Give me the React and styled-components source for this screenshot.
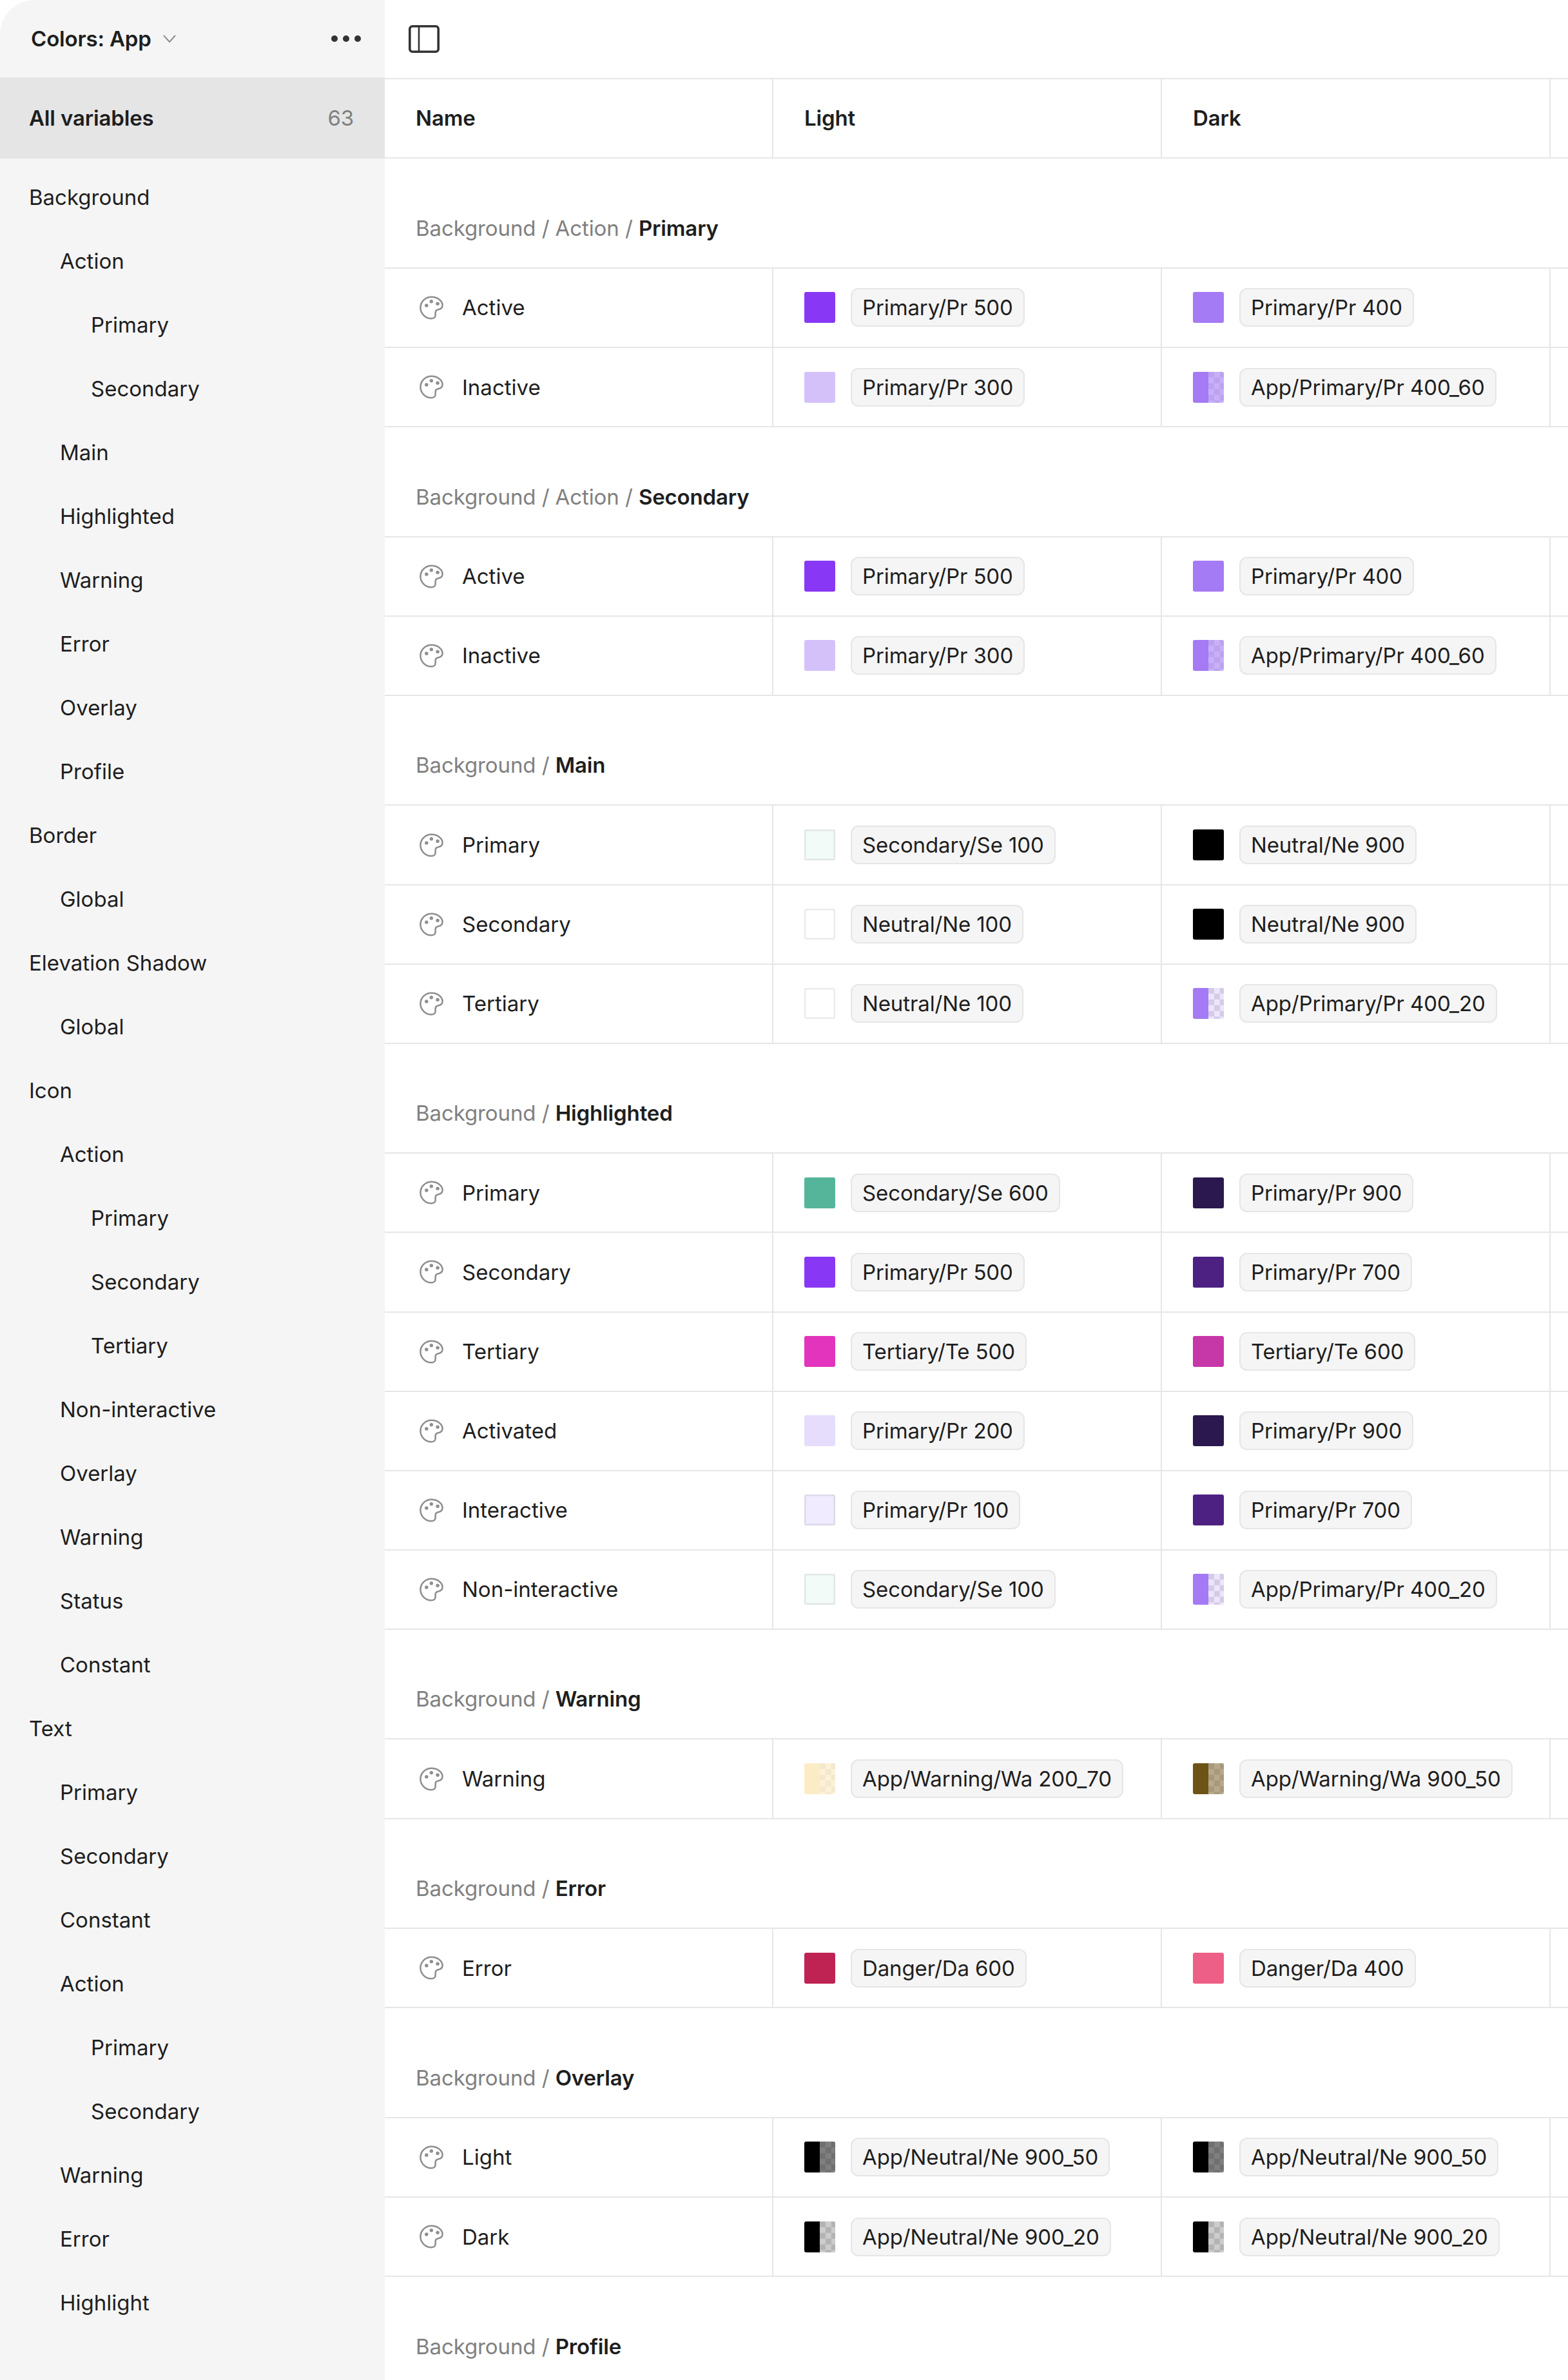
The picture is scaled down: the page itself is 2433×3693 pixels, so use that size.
import React from "react";
import styled, { createGlobalStyle } from "styled-components";

const Global = createGlobalStyle`
  html, body { margin: 0; padding: 0; background: #fff; height: 3693px; overflow: hidden; }
  #root { height: 100%; }
  * { box-sizing: border-box; }
`;

const Page = styled.div`
  display: flex;
  width: 2433px;
  height: 3693px;
  overflow: hidden;
  font-family: Inter, "Liberation Sans", sans-serif;
  font-size: 33px;
  color: #1e1e1e;
  background: #fff;
`;

const Sidebar = styled.aside`
  flex: 0 0 597px;
  background: #f5f5f5;
  border-top-left-radius: 54px;
  overflow: hidden;
`;

const SidebarHead = styled.div`
  height: 120px;
  display: flex;
  align-items: center;
  padding: 0 37px 0 48px;
`;

const Collection = styled.div`
  font-weight: 600;
  letter-spacing: -0.15px;
  display: flex;
  align-items: center;
  gap: 18px;
  flex: 1;
`;

const Dots = styled.div`
  display: flex;
  gap: 8px;
`;

const Dot = styled.span`
  width: 10px;
  height: 10px;
  border-radius: 50%;
  background: #333;
`;

const AllRow = styled.div`
  height: 126px;
  background: #e5e5e5;
  display: flex;
  align-items: center;
  justify-content: space-between;
  padding: 0 48px 0 45px;
  font-weight: 600;
  letter-spacing: -0.15px;
`;

const Count = styled.span`
  font-weight: 400;
  color: #808080;
`;

const Groups = styled.div`
  padding-top: 10px;
`;

const Group = styled.div`
  height: 99px;
  display: flex;
  align-items: center;
  padding-left: ${(p) => 45 + p.$level * 48}px;
`;

const Main = styled.main`
  flex: 1;
  min-width: 0;
`;

const TopBar = styled.div`
  height: 123px;
  display: flex;
  align-items: center;
  padding: 0 0 0 37px;
  border-bottom: 2.4px solid #e6e6e6;
`;

const Row = styled.div`
  display: grid;
  grid-template-columns: 603px 603px 603px 1fr;
  height: ${(p) => (p.$head ? 123.3 : 123.1)}px;
  border-bottom: 2.4px solid #e6e6e6;
`;

const Cell = styled.div`
  display: flex;
  align-items: center;
  min-width: 0;
  padding-left: 48px;
  padding-bottom: ${(p) => (p.$head ? "2px" : "0")};
  border-right: 2.4px solid #e6e6e6;
  font-weight: ${(p) => (p.$head ? 600 : 400)};
  letter-spacing: ${(p) => (p.$head ? "-0.15px" : "normal")};
`;

const EmptyCell = styled.div``;

const NameText = styled.span`
  margin-left: 27px;
`;

const PaletteSvg = styled.svg`
  flex: 0 0 41px;
  margin-left: 4px;
`;

const SectionTitle = styled.div`
  height: 170.6px;
  display: flex;
  align-items: flex-end;
  padding: 0 0 41px 48px;
  border-bottom: 2.4px solid #e6e6e6;
  color: #808080;
  letter-spacing: -0.1px;
  white-space: pre;
`;

const Strong = styled.strong`
  font-weight: 600;
  letter-spacing: -0.15px;
  color: #1e1e1e;
`;

const Swatch = styled.span`
  flex: 0 0 48px;
  width: 48px;
  height: 48px;
  border-radius: 3px;
  overflow: hidden;
  display: flex;
  box-shadow: ${(p) => (p.$outlined ? "inset 0 0 0 2.4px rgba(0,0,0,.08)" : "none")};
  background: ${(p) => p.$color};
`;

const SwatchAlpha = styled.span`
  margin-left: 24px;
  width: 24px;
  height: 48px;
  background-color: #fff;
  background-image: linear-gradient(${(p) => p.$overlay}, ${(p) => p.$overlay}),
    repeating-conic-gradient(#fff 0 25%, #e0e0e0 0 50%);
  background-size: 100% 100%, 17.8px 17.8px;
`;

const Tag = styled.span`
  margin-left: 24px;
  height: 60px;
  display: inline-flex;
  align-items: center;
  padding: 0 16px;
  background: #f5f5f5;
  border: 2.4px solid #e6e6e6;
  border-radius: 12px;
  letter-spacing: -0.12px;
  white-space: nowrap;
`;

const PaletteIcon = () => (
  <PaletteSvg width="41" height="41" viewBox="0 0 24 24" fill="none" stroke="#8f8f8f" strokeWidth="1.5">
    <path d="M12 2.2C6.5 2.2 2 6.6 2 12s4.5 9.8 10 9.8c2 0 3.6-1.2 3.6-3.2v-2c0-1.6.8-2.5 2.2-2.8 2.4-.4 4.2-1.8 4.2-4.1C22 5.8 17.5 2.2 12 2.2z" />
    <circle cx="7.5" cy="9.9" r="1.6" fill="#8f8f8f" stroke="none" />
    <circle cx="11.9" cy="6.3" r="1.6" fill="#8f8f8f" stroke="none" />
    <circle cx="17.6" cy="8.3" r="1.6" fill="#8f8f8f" stroke="none" />
  </PaletteSvg>
);

const Chevron = () => (
  <svg width="20" height="12" viewBox="0 0 20 12" fill="none" stroke="#8c8c8c" strokeWidth="2">
    <path d="M1 1l9 10 9-10" />
  </svg>
);

const PanelIcon = () => (
  <svg width="48" height="43" viewBox="0 0 48 43" fill="none" stroke="#333" strokeWidth="3.6">
    <rect x="1.8" y="1.8" width="44.4" height="39.4" rx="4" />
    <path d="M16 2v39" strokeWidth="2.6" />
  </svg>
);

const sidebarItems = [
  ["Background", 0], ["Action", 1], ["Primary", 2], ["Secondary", 2], ["Main", 1], ["Highlighted", 1],
  ["Warning", 1], ["Error", 1], ["Overlay", 1], ["Profile", 1], ["Border", 0], ["Global", 1],
  ["Elevation Shadow", 0], ["Global", 1], ["Icon", 0], ["Action", 1], ["Primary", 2], ["Secondary", 2],
  ["Tertiary", 2], ["Non-interactive", 1], ["Overlay", 1], ["Warning", 1], ["Status", 1], ["Constant", 1],
  ["Text", 0], ["Primary", 1], ["Secondary", 1], ["Constant", 1], ["Action", 1], ["Primary", 2],
  ["Secondary", 2], ["Warning", 1], ["Error", 1], ["Highlight", 1],
];

const C = {
  pr100: ["Primary/Pr 100", "#f0ebfe", true],
  pr200: ["Primary/Pr 200", "#e6dcfc"],
  pr300: ["Primary/Pr 300", "#d5c1fa"],
  pr400: ["Primary/Pr 400", "#a47af5"],
  pr500: ["Primary/Pr 500", "#8838f5"],
  pr700: ["Primary/Pr 700", "#4c2182"],
  pr900: ["Primary/Pr 900", "#2a184f"],
  pr40060: ["App/Primary/Pr 400_60", "#a47af5", false, "rgba(164,122,245,.6)"],
  pr40020: ["App/Primary/Pr 400_20", "#a47af5", false, "rgba(164,122,245,.2)"],
  se100: ["Secondary/Se 100", "#f3fbf9", true],
  se600: ["Secondary/Se 600", "#55b59a"],
  ne100: ["Neutral/Ne 100", "#ffffff", true],
  ne900: ["Neutral/Ne 900", "#000000"],
  te500: ["Tertiary/Te 500", "#e334bd"],
  te600: ["Tertiary/Te 600", "#c637a8"],
  wa20070: ["App/Warning/Wa 200_70", "#fcecc5", false, "rgba(252,236,197,.7)"],
  wa90050: ["App/Warning/Wa 900_50", "#6e5316", false, "rgba(110,83,22,.5)"],
  da600: ["Danger/Da 600", "#bf2354"],
  da400: ["Danger/Da 400", "#ee5f87"],
  ne90050: ["App/Neutral/Ne 900_50", "#000000", false, "rgba(0,0,0,.5)"],
  ne90020: ["App/Neutral/Ne 900_20", "#000000", false, "rgba(0,0,0,.2)"],
};

const sections = [
  { path: "Background / Action / ", name: "Primary", rows: [["Active", C.pr500, C.pr400], ["Inactive", C.pr300, C.pr40060]] },
  { path: "Background / Action / ", name: "Secondary", rows: [["Active", C.pr500, C.pr400], ["Inactive", C.pr300, C.pr40060]] },
  { path: "Background / ", name: "Main", rows: [["Primary", C.se100, C.ne900], ["Secondary", C.ne100, C.ne900], ["Tertiary", C.ne100, C.pr40020]] },
  {
    path: "Background / ", name: "Highlighted",
    rows: [
      ["Primary", C.se600, C.pr900], ["Secondary", C.pr500, C.pr700], ["Tertiary", C.te500, C.te600],
      ["Activated", C.pr200, C.pr900], ["Interactive", C.pr100, C.pr700], ["Non-interactive", C.se100, C.pr40020],
    ],
  },
  { path: "Background / ", name: "Warning", rows: [["Warning", C.wa20070, C.wa90050]] },
  { path: "Background / ", name: "Error", rows: [["Error", C.da600, C.da400]] },
  { path: "Background / ", name: "Overlay", rows: [["Light", C.ne90050, C.ne90050], ["Dark", C.ne90020, C.ne90020]] },
  { path: "Background / ", name: "Profile", rows: [] },
];

const Value = ({ v }) => (
  <Cell>
    <Swatch $color={v[1]} $outlined={v[2]}>
      {v[3] && <SwatchAlpha $overlay={v[3]} />}
    </Swatch>
    <Tag>{v[0]}</Tag>
  </Cell>
);

export default function App() {
  return (
    <Page>
      <Global />
      <Sidebar>
        <SidebarHead>
          <Collection>
            Colors: App
            <Chevron />
          </Collection>
          <Dots>
            <Dot />
            <Dot />
            <Dot />
          </Dots>
        </SidebarHead>
        <AllRow>
          All variables
          <Count>63</Count>
        </AllRow>
        <Groups>
          {sidebarItems.map(([label, level], i) => (
            <Group key={i} $level={level}>{label}</Group>
          ))}
        </Groups>
      </Sidebar>
      <Main>
        <TopBar>
          <PanelIcon />
        </TopBar>
        <Row $head>
          <Cell $head>Name</Cell>
          <Cell $head>Light</Cell>
          <Cell $head>Dark</Cell>
          <EmptyCell />
        </Row>
        {sections.map((s, i) => (
          <React.Fragment key={i}>
            <SectionTitle>
              {s.path}
              <Strong>{s.name}</Strong>
            </SectionTitle>
            {s.rows.map((r, j) => (
              <Row key={j}>
                <Cell>
                  <PaletteIcon />
                  <NameText>{r[0]}</NameText>
                </Cell>
                <Value v={r[1]} />
                <Value v={r[2]} />
                <EmptyCell />
              </Row>
            ))}
          </React.Fragment>
        ))}
      </Main>
    </Page>
  );
}
